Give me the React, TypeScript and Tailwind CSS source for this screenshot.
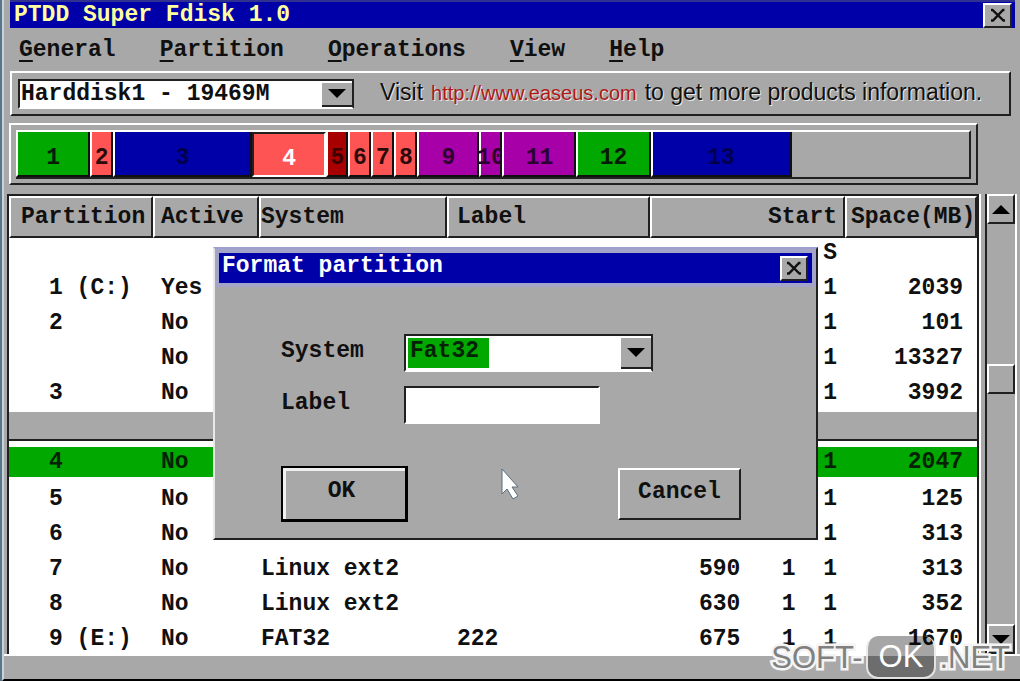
import type { ReactNode } from "react";

type Segment = {
  label: string;
  size: number;
  tone: string;
};

type PartitionRow = {
  id: string;
  active: string;
  system?: string;
  label?: string;
  start: string;
  space: string;
};

const menuItems = ["General", "Partition", "Operations", "View", "Help"];

const BAR_TOTAL = 952;

const segments: Segment[] = [
  { label: "1", size: 74, tone: "bg-[#00a800] text-[#061c06]" },
  { label: "2", size: 23, tone: "bg-[#ff5454] text-[#2b0a0a]" },
  { label: "3", size: 139, tone: "bg-[#0000a8] text-[#00004c]" },
  { label: "4", size: 74, tone: "bg-[#ff5454] text-white" },
  { label: "5", size: 22, tone: "bg-[#a80000] text-[#3c0000]" },
  { label: "6", size: 23, tone: "bg-[#ff5454] text-[#2b0a0a]" },
  { label: "7", size: 23, tone: "bg-[#ff5454] text-[#2b0a0a]" },
  { label: "8", size: 23, tone: "bg-[#ff5454] text-[#2b0a0a]" },
  { label: "9", size: 62, tone: "bg-[#a800a8] text-[#2c002c]" },
  { label: "10", size: 23, tone: "bg-[#a800a8] text-[#2c002c]" },
  { label: "11", size: 74, tone: "bg-[#a800a8] text-[#2c002c]" },
  { label: "12", size: 74, tone: "bg-[#00a800] text-[#061c06]" },
  { label: "13", size: 141, tone: "bg-[#0000a8] text-[#00004c]" },
];

const primaryRows: PartitionRow[] = [
  { id: "1 (C:)", active: "Yes", start: "1", space: "2039" },
  { id: "2", active: "No", start: "1", space: "101" },
  { id: "", active: "No", start: "1", space: "13327" },
  { id: "3", active: "No", start: "1", space: "3992" },
];

const selectedRow: PartitionRow = { id: "4", active: "No", start: "1", space: "2047" };

const logicalRows: PartitionRow[] = [
  { id: "5", active: "No", start: "1", space: "125" },
  { id: "6", active: "No", start: "1", space: "313" },
  { id: "7", active: "No", system: "Linux ext2", start: "590   1  1", space: "313" },
  { id: "8", active: "No", system: "Linux ext2", start: "630   1  1", space: "352" },
  { id: "9 (E:)", active: "No", system: "FAT32", label: "222", start: "675   1  1", space: "1670" },
];

const raised = "border-2 border-t-white border-l-white border-r-[#202020] border-b-[#202020]";

function CloseButton({ label, className }: { label: string; className: string }) {
  return (
    <button type="button" aria-label={label} className={`flex items-center justify-center bg-[#a8a8a8] ${raised} ${className}`}>
      <svg width="16" height="14" viewBox="0 0 16 14" fill="none" stroke="#101010" strokeWidth="2.4" className="shrink-0">
        <path d="M1 2h1.5l11 10.5H15M14.5 2h-1.5L3 12.5H1" />
      </svg>
    </button>
  );
}

function Triangle({ up = false }: { up?: boolean }) {
  return (
    <svg width="18" height="9" viewBox="0 0 18 9" fill="#000" aria-hidden>
      <path d={up ? "M9 0l9 9H0z" : "M0 0h18L9 9z"} />
    </svg>
  );
}

function HeaderCell({ children, className = "" }: { children: ReactNode; className?: string }) {
  return <th className={`h-[42px] bg-[#a8a8a8] text-left font-bold ${raised} ${className}`}>{children}</th>;
}

function Row({ row, selected = false }: { row: PartitionRow; selected?: boolean }) {
  return (
    <tr className={selected ? "h-[30px] bg-[#00a800] text-[#062206]" : "h-[35px]"}>
      <td className="pl-10">{row.id}</td>
      <td className="pl-2">{row.active}</td>
      <td className="pl-[2px]">{row.system}</td>
      <td className="pl-[10px]">{row.label}</td>
      <td className="pr-2 text-right">{row.start}</td>
      <td className="pr-[14px] text-right">{row.space}</td>
    </tr>
  );
}

function PartitionTable() {
  return (
    <table className="w-full table-fixed border-separate border-spacing-0 leading-[30px] whitespace-pre">
      <colgroup>
        <col className="w-[144px]" />
        <col className="w-[106px]" />
        <col className="w-[188px]" />
        <col />
        <col className="w-[195px]" />
        <col className="w-[132px]" />
      </colgroup>
      <thead>
        <tr>
          <HeaderCell className="pl-[10px]">Partition</HeaderCell>
          <HeaderCell className="pl-[6px]">Active</HeaderCell>
          <HeaderCell>System</HeaderCell>
          <HeaderCell className="pl-2">Label</HeaderCell>
          <HeaderCell className="pr-[6px] text-right">Start</HeaderCell>
          <HeaderCell className="pl-1">Space(MB)</HeaderCell>
        </tr>
      </thead>
      <tbody>
        <tr className="h-8">
          <td colSpan={4} />
          <td className="pr-2 text-right align-top">S</td>
          <td />
        </tr>
        {primaryRows.map((row, i) => (
          <Row key={i} row={row} />
        ))}
        <tr className="h-[31px]">
          <td colSpan={6} className="border-t-2 border-b-2 border-t-white border-b-[#202020] bg-[#a8a8a8]" />
        </tr>
        <tr className="h-[6px]">
          <td colSpan={6} />
        </tr>
        <Row row={selectedRow} selected />
        <tr className="h-1">
          <td colSpan={6} />
        </tr>
        {logicalRows.map((row) => (
          <Row key={row.id} row={row} />
        ))}
      </tbody>
    </table>
  );
}

function ScrollBar() {
  const button = `flex h-[30px] shrink-0 items-center justify-center bg-[#a8a8a8] ${raised}`;
  return (
    <div className="flex w-8 flex-col border-r-2 border-l-2 border-r-white border-l-[#202020]">
      <button type="button" aria-label="Scroll up" className={button}>
        <Triangle up />
      </button>
      <div className="grow-[141]" />
      <div className={button} />
      <div className="grow-[231]" />
      <button type="button" aria-label="Scroll down" className={button}>
        <Triangle />
      </button>
    </div>
  );
}

function FormatDialog() {
  return (
    <div
      role="dialog"
      aria-labelledby="format-title"
      className="absolute top-[247px] left-[209px] w-[605px] border-2 border-t-[#a0a0d0] border-r-[#202020] border-b-[#202020] border-l-[#e8e8e8] bg-[#a8a8a8]"
    >
      <div className="border-4 border-[#a4a4c8]">
        <div className="flex h-[30px] items-center justify-between bg-[#0000a8] pr-1 pl-[3px]">
          <h2 id="format-title" className="pb-1 font-bold text-white">
            Format partition
          </h2>
          <CloseButton label="Close dialog" className="h-[25px] w-7" />
        </div>
      </div>
      <form className="px-[66px] pt-[47px] pb-4" onSubmit={(e) => e.preventDefault()}>
        <div className="grid grid-cols-[123px_1fr] items-center gap-y-[14px]">
          <label htmlFor="fs" className="pb-1">
            System
          </label>
          <div className="relative flex h-[38px] w-[249px] border-2 border-t-[#202020] border-r-[#202020] border-b-white border-l-[#202020] bg-white p-[2px]">
            <select
              id="fs"
              className="h-[30px] w-full appearance-none bg-[linear-gradient(to_right,#00a800_81px,#ffffff_81px)] pb-1 pl-[2px] font-bold text-[#062206] outline-none"
            >
              <option>Fat32</option>
            </select>
            <span className="pointer-events-none absolute top-[2px] right-0 flex h-[31px] w-[30px] items-center justify-center border-b-2 border-[#202020] bg-[#a8a8a8]">
              <Triangle />
            </span>
          </div>
          <label htmlFor="volume" className="pb-1">
            Label
          </label>
          <input
            id="volume"
            type="text"
            className="h-[38px] w-[196px] border-2 border-t-[#202020] border-r-white border-b-white border-l-[#202020] bg-white px-1 outline-none"
          />
        </div>
        <div className="mt-[42px] flex items-center justify-between pr-[9px]">
          <button type="submit" className="h-[56px] w-[127px] border-2 border-r-[3px] border-b-[3px] border-black font-bold">
            <span className="flex h-full items-center justify-center border-t-[3px] border-l-[3px] border-[#f0f0f0] pr-2 pb-2">OK</span>
          </button>
          <button type="button" className={`h-[52px] w-[123px] pb-1 font-bold ${raised}`}>
            Cancel
          </button>
        </div>
      </form>
    </div>
  );
}

function Pointer() {
  return (
    <svg className="absolute top-[468px] left-[497px]" width="20" height="32" viewBox="0 0 20 32" aria-hidden>
      <path d="M1 1v25l5-5 6 10 5-3-6-9h6z" fill="#fff" stroke="#5c6c7c" strokeWidth="1" />
    </svg>
  );
}

function Watermark() {
  const outlined = "text-[#808080] [-webkit-text-stroke:5px_#f4f4f4] [paint-order:stroke_fill]";
  return (
    <div className="pointer-events-none absolute right-[10px] bottom-0 flex items-center font-['Liberation_Sans',sans-serif] text-[31px] leading-[41px] font-normal">
      <span className={outlined}>SOFT-</span>
      <span className="mx-[3px] rounded-xl border-2 border-t-0 border-white/80 bg-black/35 px-[11px] text-white">OK</span>
      <span className={outlined}>.NET</span>
    </div>
  );
}

export default function App() {
  return (
    <div className="border-l-2 border-[#5c7488]">
      <div className="relative flex min-h-screen flex-col overflow-hidden border-b-2 border-l-2 border-b-black border-l-[#c4d4dc] bg-[#a8a8a8] font-['Liberation_Mono',monospace] text-[23px] leading-[26px] font-bold text-[#101010]">
        <header className="mr-[5px] ml-[6px] flex h-7 items-center justify-between border-t-2 border-[#303090] bg-[#0000a8] pr-[3px] pl-1">
          <h1 className="text-[#ffffa0]">PTDD Super Fdisk 1.0</h1>
          <CloseButton label="Close" className="h-[25px] w-[29px]" />
        </header>

        <nav className="flex h-[43px] items-center gap-11 px-[15px]">
          {menuItems.map((item) => (
            <button key={item} type="button" className="pt-px">
              <span className="underline decoration-2 underline-offset-4">{item[0]}</span>
              {item.slice(1)}
            </button>
          ))}
        </nav>

        <section className={`mr-[9px] ml-[6px] flex h-[45px] items-center gap-[26px] px-[6px] ${raised}`}>
          <div className="relative h-[30px] w-[336px] border-2 border-t-[#202020] border-r-[#202020] border-b-white border-l-[#202020] bg-white">
            <select aria-label="Hard disk" className="h-full w-full appearance-none bg-white pl-px font-bold outline-none">
              <option>Harddisk1 - 19469M</option>
            </select>
            <span className="pointer-events-none absolute top-[2px] right-0 flex h-6 w-[30px] items-center justify-center border-b-2 border-[#202020] bg-[#a8a8a8]">
              <Triangle />
            </span>
          </div>
          <p className="flex items-baseline gap-2 pb-[3px] font-['Liberation_Sans',sans-serif] text-[23px] font-normal whitespace-nowrap [text-shadow:1px_1px_0_#e8e8e8]">
            <span>Visit</span>
            <a href="http://www.easeus.com" className="text-[20px] text-[#b01818]">
              http://www.easeus.com
            </a>
            <span>to get more products information.</span>
          </p>
        </section>

        <section className={`mt-[7px] mr-[42px] ml-[5px] p-[5px] pb-1 ${raised}`}>
          <div className={`flex h-[49px] ${raised} border-l-0`}>
            {segments.map((s) => (
              <div
                key={s.label}
                className={`flex min-w-0 items-center justify-center pt-2 ${s.tone} ${
                  s.label === "4"
                    ? "border-2 border-t-[#202020] border-r-white border-b-white border-l-[#202020]"
                    : "border-r-2 border-b-2 border-l-2 border-r-[#101010] border-b-[#101010] border-l-white"
                }`}
                style={{ width: `${(s.size / BAR_TOTAL) * 100}%` }}
              >
                {s.label}
              </div>
            ))}
          </div>
        </section>

        <main className="mt-[9px] mr-[3px] ml-[3px] flex gap-1">
          <div className="flex-1 border-r-2 border-white">
            <div className="h-[460px] overflow-hidden border-t-2 border-r-2 border-l-2 border-[#202020] bg-white">
              <PartitionTable />
            </div>
          </div>
          <ScrollBar />
        </main>

        <footer className="flex-1 border-t-2 border-white" />

        <FormatDialog />
        <Pointer />
        <Watermark />
      </div>
    </div>
  );
}
